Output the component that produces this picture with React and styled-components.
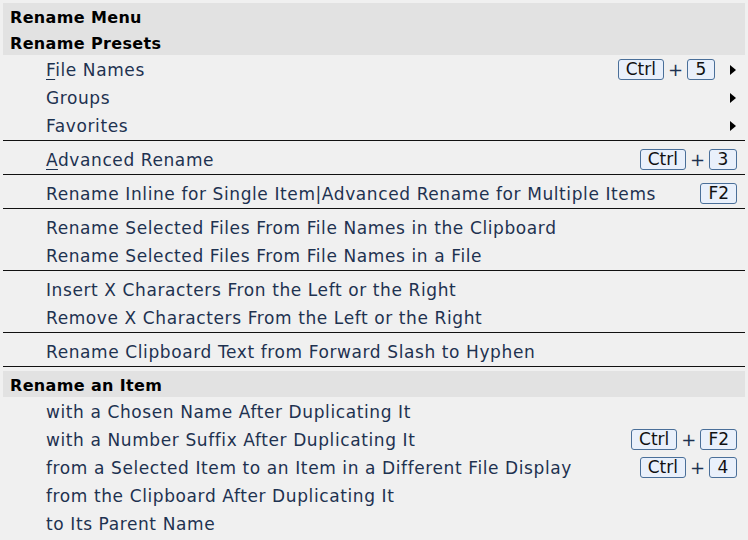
import React from "react";
import styled, { createGlobalStyle } from "styled-components";

const GlobalStyle = createGlobalStyle`
  body {
    margin: 0;
    background: #f0f0f0;
    font-family: "DejaVu Sans", Verdana, sans-serif;
  }
`;

const Menu = styled.div`
  width: 742px;
  padding: 3px;
  display: flex;
  flex-direction: column;
`;

const Header = styled.div`
  height: 26px;
  box-sizing: border-box;
  padding: 3px 0 0 7px;
  display: flex;
  align-items: center;
  background: #e2e2e2;
  color: #000;
  font-size: 16px;
  font-weight: bold;
  letter-spacing: 0.35px;
`;

const Item = styled.div`
  height: 28px;
  box-sizing: border-box;
  padding: 1px ${(p) => (p.$sub ? "0" : "8px")} 0 43px;
  display: flex;
  align-items: center;
  color: #1e3250;
  font-size: 17px;
  letter-spacing: 0.6px;
`;

const Label = styled.span`
  flex: 1;
  white-space: nowrap;
`;

const Key = styled.u`
  text-decoration: underline;
  text-underline-offset: 3px;
`;

const Shortcut = styled.span`
  display: flex;
  align-items: center;
  gap: 4px;
  letter-spacing: 0;
`;

const Kbd = styled.span`
  display: inline-flex;
  align-items: center;
  justify-content: center;
  height: 21px;
  min-width: 28px;
  padding: 0 7px;
  box-sizing: border-box;
  border: 1px solid #4a6f99;
  border-radius: 3px;
  background: #e9f0fb;
  color: #111;
  font-size: 17px;
  line-height: 1;
`;

const Plus = styled.span`
  color: #1e3250;
  font-size: 18px;
`;

const Arrow = styled.span`
  width: 30px;
  box-sizing: border-box;
  padding-right: 9px;
  display: flex;
  justify-content: flex-end;
  &::before {
    content: "";
    border-left: 6px solid #000;
    border-top: 5px solid transparent;
    border-bottom: 5px solid transparent;
  }
`;

const Separator = styled.hr`
  margin: 1px 0 4px;
  border: none;
  border-top: 1px solid #111;
`;

const Combo = ({ keys }) => (
  <Shortcut>
    {keys.map((k, i) => (
      <React.Fragment key={k}>
        {i > 0 && <Plus>+</Plus>}
        <Kbd>{k}</Kbd>
      </React.Fragment>
    ))}
  </Shortcut>
);

const App = () => (
  <>
    <GlobalStyle />
    <Menu>
      <Header>Rename Menu</Header>
      <Header>Rename Presets</Header>
      <Item $sub>
        <Label><Key>F</Key>ile Names</Label>
        <Combo keys={["Ctrl", "5"]} />
        <Arrow />
      </Item>
      <Item $sub>
        <Label>Groups</Label>
        <Arrow />
      </Item>
      <Item $sub>
        <Label>Favorites</Label>
        <Arrow />
      </Item>
      <Separator />
      <Item>
        <Label><Key>A</Key>dvanced Rename</Label>
        <Combo keys={["Ctrl", "3"]} />
      </Item>
      <Separator />
      <Item>
        <Label>Rename Inline for Single Item|Advanced Rename for Multiple Items</Label>
        <Combo keys={["F2"]} />
      </Item>
      <Separator />
      <Item>
        <Label>Rename Selected Files From File Names in the Clipboard</Label>
      </Item>
      <Item>
        <Label>Rename Selected Files From File Names in a File</Label>
      </Item>
      <Separator />
      <Item>
        <Label>Insert X Characters Fron the Left or the Right</Label>
      </Item>
      <Item>
        <Label>Remove X Characters From the Left or the Right</Label>
      </Item>
      <Separator />
      <Item>
        <Label>Rename Clipboard Text from Forward Slash to Hyphen</Label>
      </Item>
      <Separator />
      <Header>Rename an Item</Header>
      <Item>
        <Label>with a Chosen Name After Duplicating It</Label>
      </Item>
      <Item>
        <Label>with a Number Suffix After Duplicating It</Label>
        <Combo keys={["Ctrl", "F2"]} />
      </Item>
      <Item>
        <Label>from a Selected Item to an Item in a Different File Display</Label>
        <Combo keys={["Ctrl", "4"]} />
      </Item>
      <Item>
        <Label>from the Clipboard After Duplicating It</Label>
      </Item>
      <Item>
        <Label>to Its Parent Name</Label>
      </Item>
    </Menu>
  </>
);

export default App;
